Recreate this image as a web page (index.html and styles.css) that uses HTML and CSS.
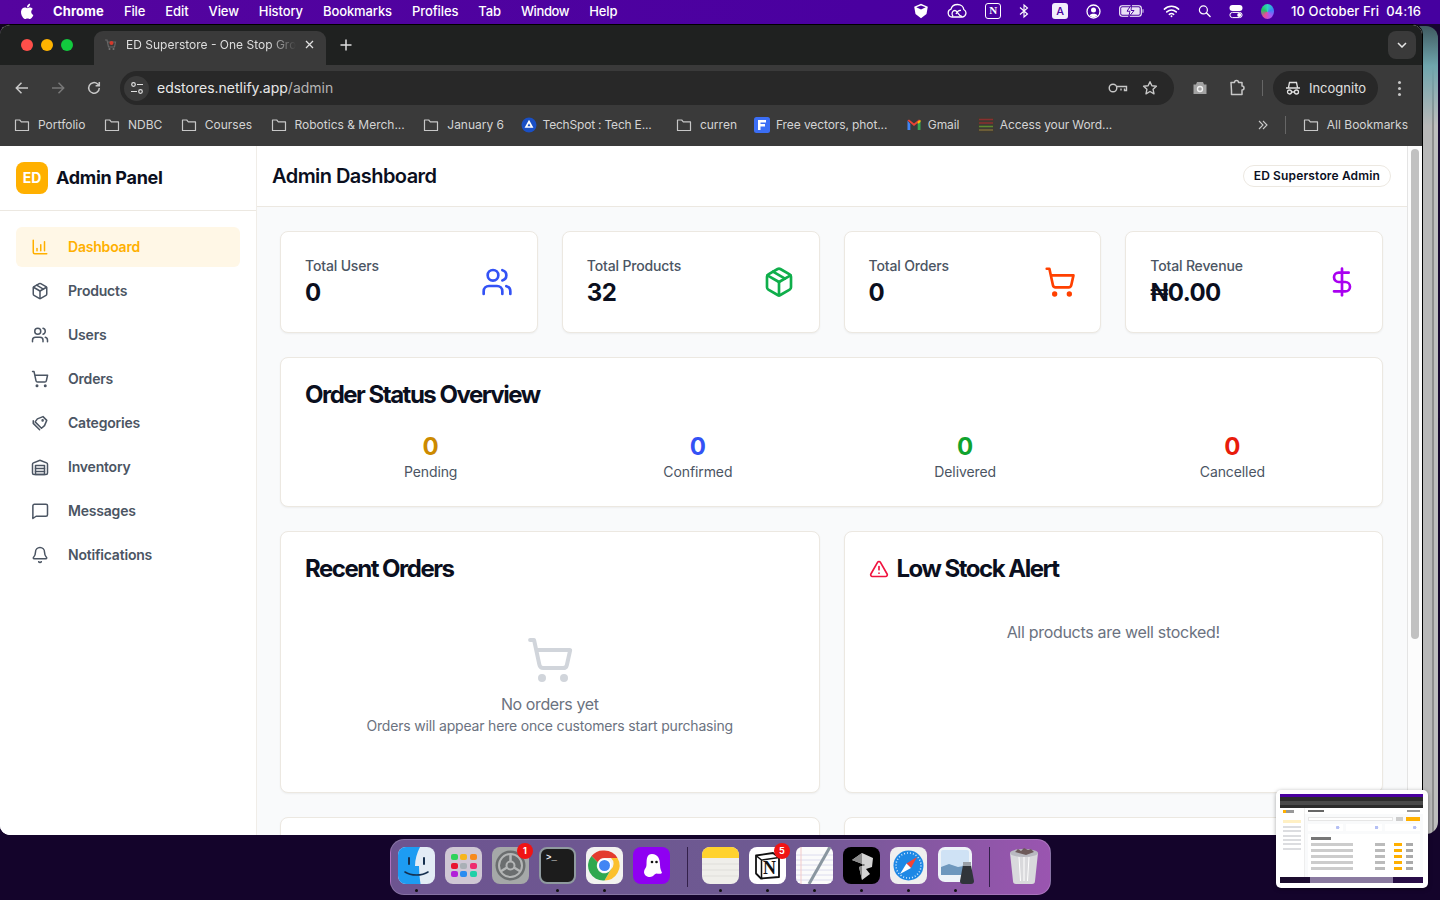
FILE: index.html
```html
<!DOCTYPE html>
<html lang="en">
<head>
  <meta charset="UTF-8" />
  <meta name="viewport" content="width=device-width, initial-scale=1.0" />
  <title>ED Superstore - Admin Dashboard</title>
  <link rel="stylesheet" href="styles.css">
</head>
<body>
  <svg width="0" height="0" class="defs">
    <defs>
      <symbol id="folder" viewBox="0 0 16 16"><path d="M1.500 3h4.200l1.600 1.800h7.200v8.700h-13z" fill="none" stroke="currentColor" stroke-width="1.200" stroke-linejoin="round"/></symbol>
      <symbol id="i-users" viewBox="0 0 24 24"><g fill="none" stroke="currentColor" stroke-width="2" stroke-linecap="round" stroke-linejoin="round"><path d="M16 21v-2a4 4 0 0 0-4-4H6a4 4 0 0 0-4 4v2"/><circle cx="9" cy="7" r="4"/><path d="M22 21v-2a4 4 0 0 0-3-3.870"/><path d="M16 3.130a4 4 0 0 1 0 7.750"/></g></symbol>
      <symbol id="i-box" viewBox="0 0 24 24"><g fill="none" stroke="currentColor" stroke-width="2" stroke-linecap="round" stroke-linejoin="round"><path d="M21 8a2 2 0 0 0-1-1.730l-7-4a2 2 0 0 0-2 0l-7 4A2 2 0 0 0 3 8v8a2 2 0 0 0 1 1.730l7 4a2 2 0 0 0 2 0l7-4A2 2 0 0 0 21 16z"/><path d="m3.300 7 8.700 5 8.700-5"/><path d="M12 22V12"/><path d="m7.500 4.270 9 5.150"/></g></symbol>
      <symbol id="i-cart" viewBox="0 0 24 24"><g fill="none" stroke="currentColor" stroke-width="2" stroke-linecap="round" stroke-linejoin="round"><circle cx="8" cy="21" r="1"/><circle cx="19" cy="21" r="1"/><path d="M2.050 2.050h2l2.660 12.420a2 2 0 0 0 2 1.580h9.780a2 2 0 0 0 1.950-1.570l1.650-7.430H5.120"/></g></symbol>
      <symbol id="i-dollar" viewBox="0 0 24 24"><g fill="none" stroke="currentColor" stroke-width="2" stroke-linecap="round" stroke-linejoin="round"><path d="M12 2v20"/><path d="M17 5H9.500a3.500 3.500 0 0 0 0 7h5a3.500 3.500 0 0 1 0 7H6"/></g></symbol>
      <symbol id="i-chart" viewBox="0 0 24 24"><g fill="none" stroke="currentColor" stroke-width="2" stroke-linecap="round" stroke-linejoin="round"><path d="M3 3v16a2 2 0 0 0 2 2h16"/><path d="M8 17v-3"/><path d="M13 17V9"/><path d="M18 17V5"/></g></symbol>
      <symbol id="i-tags" viewBox="0 0 24 24"><g fill="none" stroke="currentColor" stroke-width="2" stroke-linecap="round" stroke-linejoin="round"><path d="M8.500 6.500 16 3.500l5 5-3 7-4 3.500-8.500-8.500z"/><path d="M3 9v3.500L11.500 21"/><circle cx="15.500" cy="8.500" r=".7"/></g></symbol>
      <symbol id="i-warehouse" viewBox="0 0 24 24"><g fill="none" stroke="currentColor" stroke-width="2" stroke-linecap="round" stroke-linejoin="round"><path d="M22 8.350V20a2 2 0 0 1-2 2H4a2 2 0 0 1-2-2V8.350A2 2 0 0 1 3.260 6.500l8-3.200a2 2 0 0 1 1.480 0l8 3.200A2 2 0 0 1 22 8.350Z"/><path d="M6 18h12"/><path d="M6 14h12"/><rect x="6" y="10" width="12" height="12"/></g></symbol>
      <symbol id="i-message" viewBox="0 0 24 24"><path d="M22 17a2 2 0 0 1-2 2H6.800L2.500 22V5a2 2 0 0 1 2-2H20a2 2 0 0 1 2 2z" fill="none" stroke="currentColor" stroke-width="2" stroke-linecap="round" stroke-linejoin="round"/></symbol>
      <symbol id="i-bell" viewBox="0 0 24 24"><g fill="none" stroke="currentColor" stroke-width="2" stroke-linecap="round" stroke-linejoin="round"><path d="M10.270 21a2 2 0 0 0 3.460 0"/><path d="M3.260 15.330A1 1 0 0 0 4 17h16a1 1 0 0 0 .740-1.670C19.410 13.960 18 12.500 18 8A6 6 0 0 0 6 8c0 4.500-1.410 5.960-2.740 7.330"/></g></symbol>
      <symbol id="i-alert" viewBox="0 0 24 24"><g fill="none" stroke="currentColor" stroke-width="2" stroke-linecap="round" stroke-linejoin="round"><path d="m21.730 18-8-14a2 2 0 0 0-3.480 0l-8 14A2 2 0 0 0 4 21h16a2 2 0 0 0 1.730-3"/><path d="M12 9v4"/><path d="M12 17h.01"/></g></symbol>
    </defs>
  </svg>

  <header class="menubar">
    <div class="menu-left">
      <svg class="apple" viewBox="0 0 14 17" width="14" height="17"><path fill="#fff" d="M11.200 9c0-1.900 1.500-2.800 1.600-2.900-.9-1.300-2.200-1.500-2.700-1.500-1.200-.1-2.200.7-2.800.7s-1.500-.7-2.500-.7C3.500 4.600 2.300 5.400 1.600 6.500c-1.300 2.300-.3 5.700 1 7.600.6.900 1.400 2 2.400 1.900 1 0 1.300-.6 2.500-.6s1.500.6 2.500.6 1.700-.9 2.300-1.900c.7-1.100 1-2.100 1-2.200-.1 0-2.100-.8-2.100-2.900zM9.300 3.300c.5-.7.900-1.600.8-2.500-.8 0-1.700.5-2.300 1.200-.5.600-.9 1.500-.8 2.400.9.100 1.800-.4 2.300-1.100z"/></svg>
      <b>Chrome</b><span>File</span><span>Edit</span><span>View</span><span>History</span><span>Bookmarks</span><span>Profiles</span><span>Tab</span><span class="menu-tight">Window</span><span>Help</span>
    </div>
    <div class="menu-right">
      <svg width="16" height="16" viewBox="0 0 16 16"><path fill="#fff" d="M8 .8l6.800 3-1.300 7.200L8 15.200 2.500 11 1.200 3.800zM3.300 4.300L8 6.400l4.700-2.100L8 2.400z"/></svg>
      <svg width="20" height="16" viewBox="0 0 20 16"><g fill="none" stroke="#fff" stroke-width="1.300"><path d="M5 14a4 4 0 0 1-1-7.800C4.800 3 7.500 1.500 10.500 1.500c3.500 0 6 2.200 6.300 5A4 4 0 0 1 15.500 14z"/><path d="M6 13.500c-2.500-3.500 0-6 2-6 2.500 0 3.500 6 7 6M14 7.500c-2-.5-4 1.500-5 3.500"/></g></svg>
      <span class="n-badge">N</span>
      <svg class="bt" width="10" height="16" viewBox="0 0 10 16"><path d="M1 4.500l7.500 6.500L5 14V2l3.500 3L1 11.500" fill="none" stroke="#fff" stroke-width="1.100"/></svg>
      <span class="a-badge">A</span>
      <svg width="15" height="15" viewBox="0 0 15 15"><circle cx="7.500" cy="7.500" r="6.500" fill="none" stroke="#fff" stroke-width="1.300"/><circle cx="7.500" cy="6" r="2.500" fill="#fff"/><path d="M3.500 11.500c1-2.500 7-2.500 8 0-2 2-6 2-8 0z" fill="#fff"/></svg>
      <svg width="26" height="14" viewBox="0 0 26 14"><rect x=".7" y="1.700" width="21.600" height="10.600" rx="2.500" fill="none" stroke="#fff" stroke-width="1.100"/><rect x="2.200" y="3.200" width="18.500" height="7.600" rx="1.200" fill="#e9e0f6"/><path d="M12.500.8L8 7.200h3L9.700 13.200 15 6.500h-3z" fill="#fff" stroke="#4a00a0" stroke-width="1"/><path d="M24 5.200v3.600" stroke="#c9b5e6" stroke-width="1.200"/></svg>
      <svg width="17" height="14" viewBox="0 0 18 14"><g fill="none" stroke="#fff" stroke-width="1.700" stroke-linecap="round"><path d="M1.500 5c4-4 11-4 15 0M4 8c3-2.500 7-2.500 10 0M6.700 10.500c1.400-1 3.200-1 4.600 0"/></g><circle cx="9" cy="12.500" r="1" fill="#fff"/></svg>
      <svg width="13" height="14" viewBox="0 0 14 14"><circle cx="5.800" cy="5.800" r="4.300" fill="none" stroke="#fff" stroke-width="1.300"/><path d="M9 9l4 4" stroke="#fff" stroke-width="1.500" stroke-linecap="round"/></svg>
      <svg width="14" height="15" viewBox="0 0 14 15"><rect x=".5" y="1" width="13" height="6" rx="3" fill="#fff"/><rect x=".9" y="8.400" width="12.200" height="5.200" rx="2.600" fill="none" stroke="#fff"/><circle cx="10.200" cy="11" r="2" fill="#fff"/></svg>
      <span class="siri"></span>
      <span class="clock">10 October Fri&nbsp; 04:16</span>
    </div>
  </header>

  <div class="back-window"></div>

  <main class="browser">
    <div class="tabstrip">
      <div class="lights"><i class="light-red"></i><i class="light-yellow"></i><i class="light-green"></i></div>
      <div class="tab">
        <svg width="13" height="13" viewBox="0 0 13 13"><path d="M1 2h2l1.500 7h6l1-5H4" fill="none" stroke="#666" stroke-width="1.200"/><circle cx="7.500" cy="5" r="2" fill="#d5392b"/><circle cx="5.500" cy="11" r="1" fill="#777"/><circle cx="9.500" cy="11" r="1" fill="#777"/></svg>
        <span class="tab-title">ED Superstore - One Stop Gro</span>
        <svg width="9" height="9" viewBox="0 0 9 9"><path d="M1 1l7 7M8 1L1 8" stroke="#e0e0e0" stroke-width="1.300"/></svg>
      </div>
      <svg class="new-tab" width="12" height="12" viewBox="0 0 12 12"><path d="M6 .5v11M.5 6h11" stroke="#dedede" stroke-width="1.500"/></svg>
      <span class="tab-search"><svg width="10" height="6" viewBox="0 0 10 6"><path d="M1 1l4 4 4-4" fill="none" stroke="#e6e6e6" stroke-width="1.500"/></svg></span>
    </div>

    <div class="toolbar">
      <svg class="nav" width="16" height="16" viewBox="0 0 16 16"><path d="M14 8H2.500M7.500 2.800L2.300 8l5.200 5.200" fill="none" stroke="#c7c7c7" stroke-width="1.500"/></svg>
      <svg class="nav" width="16" height="16" viewBox="0 0 16 16"><path d="M2 8h11.500M8.500 2.800L13.700 8l-5.200 5.200" fill="none" stroke="#777" stroke-width="1.500"/></svg>
      <svg class="nav" width="16" height="16" viewBox="0 0 16 16"><path d="M13.300 8A5.300 5.300 0 1 1 11.600 4L13.300 5.700M13.300 2v3.700H9.600" fill="none" stroke="#c7c7c7" stroke-width="1.500"/></svg>
      <div class="omnibox">
        <span class="site-info"><svg width="14" height="14" viewBox="0 0 14 14"><g fill="none" stroke="#e0e0e0" stroke-width="1.200"><circle cx="3.500" cy="3.500" r="1.800"/><path d="M7 3.500h6M1 10.500h6"/><circle cx="10.500" cy="10.500" r="1.800"/></g></svg></span>
        <span class="url">edstores.netlify.app<em>/admin</em></span>
        <svg class="omni-key" width="20" height="12" viewBox="0 0 20 12"><g fill="none" stroke="#c7c7c7" stroke-width="1.400"><circle cx="5" cy="6" r="3.800"/><path d="M8.800 4.500h9.700v4h-2v-2M13 6.500v2"/></g></svg>
        <svg width="16" height="16" viewBox="0 0 16 16"><path d="M8 1.700l1.900 4.100 4.500.5-3.300 3 .9 4.500L8 11.500l-4 2.300.9-4.500-3.300-3 4.500-.5z" fill="none" stroke="#c7c7c7" stroke-width="1.400" stroke-linejoin="round"/></svg>
      </div>
      <svg class="tool" width="16" height="16" viewBox="0 0 16 16"><path d="M1.500 4.500h2.500l1-2.500h6l1 2.500h2.500v9.500h-13z" fill="#a3a3a3"/><circle cx="8" cy="9" r="2.500" fill="none" stroke="#efefef" stroke-width="1.400"/></svg>
      <svg class="tool" width="18" height="18" viewBox="0 0 18 18"><path d="M3 3.500h3.500a2 2 0 0 1 4 0H14v3.500a2 2 0 0 1 0 4v4.500H3.500V12z" fill="none" stroke="#c7c7c7" stroke-width="1.500" stroke-linejoin="round"/></svg>
      <span class="tool-sep"></span>
      <span class="incognito"><svg width="16" height="16" viewBox="0 0 16 16"><g fill="none" stroke="#e0e0e0" stroke-width="1.300"><path d="M1 8h14M3.500 7.500l1-5h7l1 5"/><circle cx="4.500" cy="12" r="2"/><circle cx="11.500" cy="12" r="2"/><path d="M6.500 12h3"/></g></svg>Incognito</span>
      <span class="kebab"><i></i><i></i><i></i></span>
    </div>

    <div class="bookmarks">
      <span class="bm"><svg class="bm-ico"><use href="#folder"/></svg>Portfolio</span>
      <span class="bm"><svg class="bm-ico"><use href="#folder"/></svg>NDBC</span>
      <span class="bm"><svg class="bm-ico"><use href="#folder"/></svg>Courses</span>
      <span class="bm"><svg class="bm-ico"><use href="#folder"/></svg>Robotics &amp; Merch...</span>
      <span class="bm"><svg class="bm-ico"><use href="#folder"/></svg>January 6</span>
      <span class="bm fav bm-tech"><svg class="bm-ico" viewBox="0 0 16 16"><circle cx="8" cy="8" r="7.500" fill="#1a4fc4"/><path d="M8 4.500l3 5.500H5z" fill="none" stroke="#fff" stroke-width="1.700"/></svg>TechSpot : Tech E...</span>
      <span class="bm"><svg class="bm-ico"><use href="#folder"/></svg>curren</span>
      <span class="bm fav bm-free"><svg class="bm-ico" viewBox="0 0 16 16"><rect width="16" height="16" rx="2.500" fill="#3b6ef5"/><path d="M4 3h8v2.500H6.500V7H11v2.500H6.500V13H4z" fill="#fff"/></svg>Free vectors, phot...</span>
      <span class="bm fav"><svg class="bm-ico" viewBox="0 0 16 16"><path d="M1.500 3.500v9.500h2.800V7z" fill="#4285f4"/><path d="M14.500 3.500v9.500h-2.800V7z" fill="#34a853"/><path d="M1.500 3.500L3 2.500 8 6.500l5-4 1.500 1L8 9z" fill="#ea4335"/><path d="M11.700 4.400L14.500 3v2L11.700 7z" fill="#fbbc05"/></svg>Gmail</span>
      <span class="bm fav"><svg class="bm-ico" viewBox="0 0 16 16"><rect width="16" height="16" fill="#3d3a33"/><path d="M1 2.500h14M1 6h14" stroke="#8a2f2f" stroke-width="1.500"/><path d="M1 9.500h14" stroke="#5d8a2f" stroke-width="1.500"/><path d="M1 13h14" stroke="#7d6a3a" stroke-width="1.500"/></svg>Access your Word...</span>
      <span class="bm-end">
        <svg width="10" height="10" viewBox="0 0 10 10"><path d="M1 1l4 4-4 4M5 1l4 4-4 4" fill="none" stroke="#c7c7c7" stroke-width="1.100"/></svg>
        <span class="bm-sep"></span>
        <span class="bm"><svg class="bm-ico"><use href="#folder"/></svg>All Bookmarks</span>
      </span>
    </div>

    <div class="page">
      <aside class="sidebar">
        <div class="brand"><span class="logo">ED</span><span class="brand-name">Admin Panel</span></div>
        <nav class="side-nav">
          <a class="nav-item active"><svg class="nav-ico"><use href="#i-chart"/></svg><span>Dashboard</span></a>
          <a class="nav-item"><svg class="nav-ico"><use href="#i-box"/></svg><span>Products</span></a>
          <a class="nav-item"><svg class="nav-ico"><use href="#i-users"/></svg><span>Users</span></a>
          <a class="nav-item"><svg class="nav-ico"><use href="#i-cart"/></svg><span>Orders</span></a>
          <a class="nav-item"><svg class="nav-ico"><use href="#i-tags"/></svg><span>Categories</span></a>
          <a class="nav-item"><svg class="nav-ico"><use href="#i-warehouse"/></svg><span>Inventory</span></a>
          <a class="nav-item"><svg class="nav-ico"><use href="#i-message"/></svg><span>Messages</span></a>
          <a class="nav-item"><svg class="nav-ico"><use href="#i-bell"/></svg><span>Notifications</span></a>
        </nav>
      </aside>

      <section class="main">
        <div class="topbar">
          <h1>Admin Dashboard</h1>
          <span class="admin-pill">ED Superstore Admin</span>
        </div>
        <div class="content">
          <div class="stats">
            <div class="card stat"><div><p class="stat-label">Total Users</p><p class="stat-value">0</p></div><svg class="stat-ico tone-blue"><use href="#i-users"/></svg></div>
            <div class="card stat"><div><p class="stat-label">Total Products</p><p class="stat-value">32</p></div><svg class="stat-ico tone-green"><use href="#i-box"/></svg></div>
            <div class="card stat"><div><p class="stat-label">Total Orders</p><p class="stat-value">0</p></div><svg class="stat-ico tone-orange"><use href="#i-cart"/></svg></div>
            <div class="card stat"><div><p class="stat-label">Total Revenue</p><p class="stat-value">₦0.00</p></div><svg class="stat-ico tone-purple"><use href="#i-dollar"/></svg></div>
          </div>

          <div class="card overview">
            <h2>Order Status Overview</h2>
            <div class="overview-grid">
              <div><p class="ov-num tone-amber">0</p><p class="ov-label">Pending</p></div>
              <div><p class="ov-num tone-blue">0</p><p class="ov-label">Confirmed</p></div>
              <div><p class="ov-num tone-leaf">0</p><p class="ov-label">Delivered</p></div>
              <div><p class="ov-num tone-red">0</p><p class="ov-label">Cancelled</p></div>
            </div>
          </div>

          <div class="two-col">
            <div class="card panel">
              <h2>Recent Orders</h2>
              <div class="empty">
                <svg class="empty-ico"><use href="#i-cart"/></svg>
                <p class="empty-title">No orders yet</p>
                <p class="empty-sub">Orders will appear here once customers start purchasing</p>
              </div>
            </div>
            <div class="card panel">
              <h2 class="with-ico"><svg class="alert-ico"><use href="#i-alert"/></svg>Low Stock Alert</h2>
              <p class="stocked">All products are well stocked!</p>
            </div>
          </div>

          <div class="two-col">
            <div class="card panel"></div>
            <div class="card panel"></div>
          </div>
        </div>
      </section>
      <div class="scrollbar"><span class="thumb"></span></div>
    </div>
  </main>

  <footer class="dock">
    <span class="app"><svg viewBox="0 0 37 37"><rect width="37" height="37" rx="8" fill="#e3ecf5"/><path d="M8 0h14c-3 6-5 12-5 19h4c0 6 .5 12 1.500 18H8a8 8 0 0 1-8-8V8a8 8 0 0 1 8-8z" fill="#1d9cf2"/><path d="M11 11v6M26 11v6" stroke="#16304f" stroke-width="2" stroke-linecap="round"/><path d="M7 25c6 4 17 4 23 0" fill="none" stroke="#16304f" stroke-width="1.600" stroke-linecap="round"/></svg></span>
    <span class="app launchpad"><i></i><i></i><i></i><i></i><i></i><i></i><i></i><i></i><i></i></span>
    <span class="app"><svg viewBox="0 0 37 37"><rect width="37" height="37" rx="8" fill="#a5a8a8"/><circle cx="18.500" cy="18.500" r="15" fill="#6b6e6f"/><circle cx="18.500" cy="18.500" r="11.500" fill="none" stroke="#b4b6b6" stroke-width="2"/><circle cx="18.500" cy="18.500" r="4" fill="none" stroke="#b4b6b6" stroke-width="2"/><path d="M18.500 14.500V7M15 20.500l-6.500 4M22 20.500l6.500 4" stroke="#b4b6b6" stroke-width="2.500"/></svg><em class="badge">1</em></span>
    <span class="app terminal"><span>&gt;_</span></span>
    <span class="app"><svg viewBox="0 0 37 37"><rect width="37" height="37" rx="8" fill="#f2f2f0"/><path d="M18.500 3.500a15 15 0 0 1 13 7.500H18.500a7.500 7.500 0 0 0-6.800 4.300L5.500 9A15 15 0 0 1 18.500 3.500z" fill="#e33b2e"/><path d="M31.500 11a15 15 0 0 1-13 22.500l6.500-11.200A7.500 7.500 0 0 0 25 11z" fill="#fbc02d"/><path d="M5.500 9a15 15 0 0 0 13 24.500l6.500-11.200a7.500 7.500 0 0 1-13.300-7z" fill="#2fa84f"/><circle cx="18.500" cy="18.500" r="7" fill="#fff"/><circle cx="18.500" cy="18.500" r="5.500" fill="#4285f4"/></svg></span>
    <span class="app"><svg viewBox="0 0 37 37"><rect width="37" height="37" rx="8" fill="#8f00f2"/><path d="M19 7c6 0 8 5 8 11 0 4 1.500 6 2 8-2 1.500-4 .5-5.500.5S20 30 17 30s-6-2-6-5 2.500-4 2.500-7C13.500 11 14 7 19 7z" fill="#fff"/><circle cx="19" cy="15" r="1.300" fill="#111"/><circle cx="23.500" cy="15" r="1.300" fill="#111"/></svg></span>
    <span class="dock-sep"></span>
    <span class="app"><svg viewBox="0 0 37 37"><rect width="37" height="37" rx="8" fill="#efeeea"/><path d="M0 11V8a8 8 0 0 1 8-8h21a8 8 0 0 1 8 8v3z" fill="#ffd22e"/><path d="M0 17h37M0 23h37M0 29h37" stroke="#dfdeda"/></svg></span>
    <span class="app notion"><svg viewBox="0 0 37 37"><rect width="37" height="37" rx="8" fill="#fff"/><path d="M7 8.500L24 6l6 4.500V30l-18 1.500-5-5z" fill="#fff" stroke="#111" stroke-width="1.800" stroke-linejoin="round"/><path d="M7.500 9l5 4 17.500-2.500M12.500 13v18" fill="none" stroke="#111" stroke-width="1.500"/></svg><span class="notion-n">N</span><em class="badge">5</em></span>
    <span class="app"><svg viewBox="0 0 37 37"><rect width="37" height="37" rx="6" fill="#fbfbfb"/><path d="M0 8h37M0 13h37M0 18h37M0 23h37M0 28h37M0 33h37" stroke="#dcdcee"/><path d="M5 0v37" stroke="#f2c9c9"/><path d="M34 0L13 37" stroke="#8a96a0" stroke-width="3"/></svg></span>
    <span class="app"><svg viewBox="0 0 37 37"><rect width="37" height="37" rx="8" fill="#000"/><path d="M19 6l11 5-1 9-6 2 4 5-8 6-3-13 6-2-13-5z" fill="#d4d4d4"/><path d="M19 6l-10 7 13 5-6 2 3 13z" fill="#8b8b8b"/></svg></span>
    <span class="app"><svg viewBox="0 0 37 37"><rect width="37" height="37" rx="8" fill="#efefef"/><circle cx="18.500" cy="18.500" r="15" fill="#1e88e5"/><circle cx="18.500" cy="18.500" r="12.500" fill="none" stroke="#d5ebff" stroke-width="1.500" stroke-dasharray="1 2"/><path d="M27 10l-6 11-4.500-4.500z" fill="#f44336"/><path d="M10 27l6.500-10.500 4.500 4.500z" fill="#fff"/></svg></span>
    <span class="app"><svg viewBox="0 0 37 37"><rect x="1" width="34" height="35" rx="7" fill="#eef3f8"/><rect x="4" y="3" width="28" height="25" rx="2" fill="#cfe2f5"/><path d="M4 20l8-3 9 3 11-2v10H4z" fill="#6e97bd"/><path d="M26 18h8l3 16a3 3 0 0 1-3 3h-8a3 3 0 0 1-3-3z" fill="#30343a"/><rect x="26" y="15" width="8" height="4" fill="#9aa0a8"/></svg></span>
    <span class="dock-sep sep-last"></span>
    <span class="app trash"><svg viewBox="0 0 34 37"><path d="M3 6h28l-3 28a3 3 0 0 1-3 3H9a3 3 0 0 1-3-3z" fill="#d9d9dc"/><ellipse cx="17" cy="6" rx="14" ry="4" fill="#b9b9c0"/><path d="M8 5l3-3 3 2 3-3 4 2 3-1 3 3-8 3z" fill="#6d5a5a"/><path d="M12 10l1.500 24M22 10l-1.500 24M17 10v24" stroke="#fff" stroke-width="1"/></svg></span>
    <i class="dot d1"></i><i class="dot d2"></i><i class="dot d3"></i><i class="dot d4"></i><i class="dot d5"></i><i class="dot d6"></i><i class="dot d7"></i><i class="dot d8"></i><i class="dot d9"></i>
  </footer>

  <div class="shot-thumb">
    <div class="st-menubar"></div>
    <div class="st-chrome"></div>
    <div class="st-page">
      <div class="st-side"><i class="st-logo"></i><i class="st-on"></i><i></i><i></i><i></i><i></i><i></i><i></i></div>
      <div class="st-body">
        <div class="st-top"><i class="st-title"></i><i class="st-admin"></i></div>
        <div class="st-search"><i class="st-field"></i><i class="st-ghost"></i><i class="st-btn"></i></div>
        <div class="st-stats"><i></i><i></i><i></i></div>
        <div class="st-table"><i class="st-head"></i><i></i><i></i><i></i><i></i><i></i></div>
      </div>
    </div>
    <div class="st-dock"><i></i></div>
  </div>
</body>
</html>
```

FILE: styles.css
```css
* {
  box-sizing: border-box;
}
html, body {
  margin: 0;
  height: 100%;
}
body {
  position: relative;
  width: 1440px;
  height: 900px;
  overflow: hidden;
  font-family: Inter, 'Noto Sans', sans-serif;
  background: linear-gradient(168deg, transparent 60%, #14042b 60%),
    linear-gradient(100deg, #12031f 0%, #1c0640 40%, #4a1672 74%, #170530 88%);
}
p, h1, h2 {
  margin: 0;
}
.defs {
  position: absolute;
}

/* mac menu bar */
.menubar {
  height: 24px;
  padding: 0 19px 2px 20px;
  display: flex;
  justify-content: space-between;
  align-items: center;
  background: linear-gradient(90deg, #55049f, #4a00a0 60%, #4600a0);
  color: #fff;
  font-size: 13px;
  font-weight: 500;
}
.menu-left {
  display: flex;
  align-items: center;
  gap: 20px;
}
.menu-left .apple {
  margin-right: -1px;
}
.menu-left b {
  font-weight: 700;
  letter-spacing: .1px;
}
.menu-left span {
  letter-spacing: -0.1px;
}
.menu-left .menu-tight {
  letter-spacing: -0.4px;
}
.menu-right {
  display: flex;
  align-items: center;
  gap: 18px;
}
.bt {
  margin-right: 5px;
}
.n-badge {
  width: 16px;
  height: 16px;
  border: 1.3px solid #fff;
  border-radius: 3px;
  font: 700 11px 'Liberation Serif', serif;
  text-align: center;
  line-height: 13px;
}
.a-badge {
  width: 16px;
  height: 16px;
  background: #f2eefc;
  color: #4a00a0;
  border-radius: 3px;
  font-size: 11px;
  text-align: center;
  line-height: 16px;
}
.siri {
  width: 13px;
  height: 15px;
  border-radius: 50%;
  background: conic-gradient(#2dd4bf, #3b82f6, #a855f7, #ec4899, #22c55e, #2dd4bf);
}
.clock {
  margin-left: -1px;
  letter-spacing: .08px;
}

/* windows on the desktop */
.back-window {
  position: absolute;
  left: 1416px;
  top: 26px;
  width: 22px;
  height: 808px;
  background: linear-gradient(#3f5a60 0, #6fa5ad 40px, rgba(160, 175, 178, 0) 100px),
    linear-gradient(90deg, #b8b8b8 0 73%, #8e8e8e 73% 82%, #bdbdbd 82%);
  border-radius: 0 12px 12px 0;
}
.browser {
  position: absolute;
  left: 0;
  top: 24px;
  width: 1423px;
  height: 811px;
  display: flex;
  flex-direction: column;
  overflow: hidden;
  border: 1px solid #000;
  border-left: 0;
  border-bottom: 0;
  border-radius: 10px;
  background: #fff;
}

/* tab strip */
.tabstrip {
  height: 40px;
  flex: none;
  display: flex;
  align-items: flex-end;
  background: #1f2120;
  position: relative;
}
.lights {
  display: flex;
  gap: 8px;
  padding: 0 0 14px 21px;
  margin-right: 21px;
}
.lights i {
  width: 12px;
  height: 12px;
  border-radius: 50%;
}
.light-red { background: #ff4f4a; }
.light-yellow { background: #ffb400; }
.light-green { background: #12c93e; }
.tab {
  width: 232px;
  height: 34px;
  padding: 0 12px 7px 10px;
  display: flex;
  align-items: center;
  gap: 9px;
  background: #3a3a3a;
  border-radius: 9px 9px 0 0;
  color: #dedede;
  font-size: 12px;
}
.tab-title {
  flex: 1;
  min-width: 0;
  overflow: hidden;
  white-space: nowrap;
  -webkit-mask-image: linear-gradient(90deg, #000 84%, transparent);
  mask-image: linear-gradient(90deg, #000 84%, transparent);
}
.new-tab {
  margin: 0 0 14px 14px;
}
.tab-search {
  position: absolute;
  right: 6px;
  top: 6px;
  width: 28px;
  height: 28px;
  display: flex;
  align-items: center;
  justify-content: center;
  background: #3a3a3a;
  border-radius: 8px;
}

/* toolbar */
.toolbar {
  height: 40px;
  flex: none;
  display: flex;
  align-items: center;
  padding: 6px 14px 0 14px;
  background: #3a3a3a;
}
.nav {
  margin-right: 20px;
}
.omnibox {
  width: 1054px;
  height: 34px;
  margin-left: -2px;
  padding: 0 16px 0 4px;
  display: flex;
  align-items: center;
  background: #282828;
  border-radius: 17px;
}
.site-info {
  width: 25px;
  height: 25px;
  display: flex;
  align-items: center;
  justify-content: center;
  background: #3a3a3a;
  border-radius: 50%;
}
.url {
  flex: 1;
  margin: -2px 0 0 8px;
  color: #e8e8e8;
  font-size: 14px;
}
.url em {
  font-style: normal;
  color: #b5b5b5;
}
.omni-key {
  margin-right: 14px;
}
.tool {
  margin-left: 18px;
}
.tool + .tool {
  margin-left: 20px;
}
.tool-sep {
  width: 1px;
  height: 16px;
  margin: 0 10px 0 16px;
  background: #666;
}
.incognito {
  width: 105px;
  height: 34px;
  display: flex;
  align-items: center;
  justify-content: center;
  gap: 8px;
  background: #282828;
  border-radius: 17px;
  color: #e0e0e0;
  font-size: 13px;
}
.kebab {
  margin-left: 20px;
  display: flex;
  flex-direction: column;
  gap: 3px;
}
.kebab i {
  width: 3px;
  height: 3px;
  border-radius: 50%;
  background: #c7c7c7;
}

/* bookmarks */
.bookmarks {
  height: 41px;
  flex: none;
  display: flex;
  align-items: center;
  gap: 18.5px;
  padding: 0 14px 2px;
  background: #3a3a3a;
  color: #d4d4d4;
  font-size: 12px;
}
.bm {
  display: flex;
  align-items: center;
  gap: 8px;
  white-space: nowrap;
}
.fav {
  gap: 6px;
  letter-spacing: -0.1px;
}
.bm-tech {
  margin: 0 6px 0 -2px;
  letter-spacing: -0.2px;
}
.bm-free {
  margin-left: -1.5px;
}
.bm-ico {
  width: 16px;
  height: 16px;
  color: #c7c7c7;
}
.bm-end {
  margin-left: auto;
  display: flex;
  align-items: center;
  gap: 17px;
}
.bm-sep {
  width: 1px;
  height: 18px;
  background: #666;
}

/* admin page */
.page {
  flex: 1;
  min-height: 0;
  display: flex;
  background: #f9fafb;
  overflow: hidden;
}
.sidebar {
  width: 257px;
  flex: none;
  background: #fff;
  border-right: 1px solid #f0ede8;
}
.brand {
  height: 65px;
  padding: 0 16px 1px;
  display: flex;
  align-items: center;
  gap: 8px;
  border-bottom: 1px solid #ece8e1;
}
.logo {
  width: 32px;
  height: 32px;
  display: flex;
  align-items: center;
  justify-content: center;
  background: #ffb000;
  border-radius: 8px;
  color: #fff;
  font-size: 14px;
  font-weight: 700;
}
.brand-name {
  color: #0b0f1e;
  font-size: 18px;
  font-weight: 700;
  letter-spacing: -0.3px;
}
.side-nav {
  padding: 16px;
  display: flex;
  flex-direction: column;
  gap: 4px;
}
.nav-item {
  height: 40px;
  padding: 0 15px;
  display: flex;
  align-items: center;
  gap: 19px;
  border-radius: 6px;
  color: #4b5563;
  font-size: 14px;
  font-weight: 600;
  letter-spacing: -0.2px;
}
.nav-item span {
  margin-top: -2px;
}
.nav-item.active {
  background: #fff7e6;
  color: #ffb000;
}
.nav-ico {
  width: 18px;
  height: 18px;
}
.main {
  flex: 1;
  min-width: 0;
}
.topbar {
  height: 61px;
  padding: 0 16px 0 15px;
  display: flex;
  align-items: center;
  justify-content: space-between;
  background: #fff;
  border-bottom: 1px solid #ece8e1;
}
.topbar h1 {
  color: #0b0f1e;
  font-size: 20px;
  font-weight: 600;
  letter-spacing: -0.55px;
}
.admin-pill {
  padding: 2px 10px;
  border: 1px solid #ece8e1;
  border-radius: 11px;
  color: #0b0f1e;
  font-size: 12px;
  font-weight: 600;
  line-height: 16px;
  letter-spacing: .15px;
}
.content {
  padding: 24px 24px 0 23px;
  display: flex;
  flex-direction: column;
  gap: 24px;
}
.card {
  background: #fff;
  border: 1px solid #ece8e1;
  border-radius: 8px;
  box-shadow: 0 1px 2px rgba(0, 0, 0, .05);
}
.stats {
  display: grid;
  grid-template-columns: repeat(4, 1fr);
  gap: 24px;
}
.stat {
  height: 102px;
  padding: 0 24px;
  display: flex;
  align-items: center;
  justify-content: space-between;
}
.stat-label {
  color: #4b5563;
  font-size: 14px;
  font-weight: 500;
  line-height: 20px;
  letter-spacing: -0.15px;
}
.stat-value {
  margin: 1px 0 -1px;
  color: #0b0f1e;
  font-size: 24px;
  font-weight: 700;
  line-height: 32px;
  letter-spacing: -0.6px;
}
.stat-ico {
  width: 32px;
  height: 32px;
}
.tone-blue { color: #3352f5; }
.tone-green { color: #0fae4b; }
.tone-orange { color: #ff4000; }
.tone-purple { color: #a900f0; }
.tone-amber { color: #cc8a00; }
.tone-leaf { color: #0fa32e; }
.tone-red { color: #e81c0c; }
.overview {
  height: 150px;
  padding: 24px;
}
h2 {
  margin: -1px 0 1px;
  color: #0b0f1e;
  font-size: 24px;
  font-weight: 700;
  letter-spacing: -1.5px;
  line-height: 28px;
}
.overview-grid {
  margin-top: 22px;
  display: grid;
  grid-template-columns: repeat(4, 1fr);
  gap: 16px;
  text-align: center;
}
.ov-num {
  font-size: 24px;
  font-weight: 700;
  line-height: 32px;
}
.ov-label {
  margin-top: -1px;
  color: #4b5563;
  font-size: 14px;
  line-height: 20px;
  letter-spacing: -0.1px;
}
.two-col {
  display: grid;
  grid-template-columns: 1fr 1fr;
  gap: 24px;
}
.panel {
  height: 262px;
  padding: 24px;
}
.with-ico {
  display: flex;
  align-items: center;
  gap: 8px;
}
.alert-ico {
  width: 20px;
  height: 20px;
  color: #f0133f;
}
.empty {
  margin-top: 53px;
  text-align: center;
  color: #6b7280;
}
.empty-ico {
  width: 48px;
  height: 48px;
  color: #d1d5db;
  display: block;
  margin: 0 auto 8px;
}
.empty-title {
  font-size: 16px;
  line-height: 24px;
  letter-spacing: -0.4px;
}
.empty-sub {
  font-size: 14px;
  line-height: 20px;
  letter-spacing: -0.18px;
}
.stocked {
  margin-top: 37px;
  text-align: center;
  color: #6b7280;
  font-size: 16px;
  line-height: 24px;
  letter-spacing: -0.3px;
}
.scrollbar {
  width: 15px;
  flex: none;
  padding: 3px;
  background: #fcfcfc;
  border-left: 1px solid #e4e4e4;
}
.thumb {
  display: block;
  width: 8px;
  height: 490px;
  border-radius: 4px;
  background: #c1c1c1;
}

/* dock */
.dock {
  position: absolute;
  left: 390px;
  top: 839px;
  width: 661px;
  height: 56px;
  padding: 0 2px;
  display: flex;
  align-items: center;
  background: linear-gradient(90deg, #6d5490, #6e5a92 60%, #9a55b0);
  border: 1px solid rgba(255, 255, 255, .18);
  border-radius: 14px;
}
.app {
  position: relative;
  top: -1.5px;
  width: 37px;
  height: 37px;
  margin: 0 5px;
  flex: none;
  display: block;
}
.app svg {
  display: block;
  width: 100%;
  height: 100%;
}
.dock-sep {
  width: 1px;
  height: 40px;
  margin: 0 9.5px 0 11.5px;
  background: #33204a;
}
.sep-last {
  margin: 0 12px 0 10px;
}
.badge {
  position: absolute;
  right: -4px;
  top: -4px;
  width: 16px;
  height: 16px;
  border-radius: 50%;
  background: #f01414;
  color: #fff;
  font: 700 9px/16px Inter, sans-serif;
  text-align: center;
}
.launchpad {
  display: grid;
  grid-template-columns: repeat(3, 7px);
  gap: 2.5px;
  align-content: center;
  justify-content: center;
  background: #cfc7d4;
  border-radius: 8px;
}
.launchpad i {
  height: 6px;
  border-radius: 2px;
  background: #e8152f;
}
.launchpad i:nth-child(1) { background: #2fd25a; }
.launchpad i:nth-child(2) { background: #f7b51c; }
.launchpad i:nth-child(3) { background: #f78a1c; }
.launchpad i:nth-child(5) { background: #a9b0b6; }
.launchpad i:nth-child(6) { background: #ee2a6f; }
.launchpad i:nth-child(7) { background: #b120d8; }
.launchpad i:nth-child(8) { background: #2a8cf0; }
.launchpad i:nth-child(9) { background: #1fd0a8; }
.terminal {
  padding: 4px 5px;
  background: #1c1c1c;
  border: 2px solid #8f9a9f;
  border-radius: 8px;
  color: #eee;
  font: 700 9px 'Liberation Mono', monospace;
}
.notion-n {
  position: absolute;
  left: 14px;
  top: 11px;
  color: #111;
  font: 700 18px/20px 'Liberation Serif', serif;
}
.trash {
  width: 34px;
}
.dot {
  position: absolute;
  top: 49px;
  width: 3px;
  height: 3px;
  border-radius: 50%;
  background: #111;
}
.d1 { left: 23.5px; }
.d2 { left: 164.5px; }
.d3 { left: 211.5px; }
.d4 { left: 327.5px; }
.d5 { left: 374.5px; }
.d6 { left: 421.5px; }
.d7 { left: 468.5px; }
.d8 { left: 515.5px; }
.d9 { left: 562.5px; }

/* screenshot preview in the corner */
.shot-thumb {
  position: absolute;
  left: 1276px;
  top: 790px;
  width: 152px;
  height: 98px;
  padding: 4px 5px 5px 4px;
  display: flex;
  flex-direction: column;
  background: #fff;
  border-radius: 5px;
  overflow: hidden;
  box-shadow: 0 1px 4px rgba(0, 0, 0, .35);
}
.st-menubar {
  height: 3px;
  flex: none;
  background: #4a00a0;
}
.st-chrome {
  height: 11px;
  flex: none;
  background: repeating-linear-gradient(#2c2c2c 0 4px, #4a4a4a 4px 8px);
}
.st-page {
  flex: 1;
  display: flex;
  background: #f9fafb;
}
.st-side {
  width: 25px;
  padding: 2px 3px;
  display: flex;
  flex-direction: column;
  gap: 2.4px;
  background: #fff;
  border-right: 1px solid #eee;
}
.st-side i {
  height: 2px;
  background: #dcdde0;
}
.st-side .st-logo {
  width: 11px;
  height: 3px;
  margin-bottom: 5px;
  background: linear-gradient(90deg, #ffb000 0 30%, #999 30%);
}
.st-side .st-on {
  height: 3px;
  background: #fff0c4;
}
.st-body {
  flex: 1;
  min-width: 0;
  display: flex;
  flex-direction: column;
}
.st-top {
  height: 6px;
  padding: 2px 3px;
  display: flex;
  justify-content: space-between;
  background: #fff;
}
.st-title, .st-admin {
  width: 16px;
  height: 2px;
  background: #666;
}
.st-admin {
  width: 13px;
  background: #999;
}
.st-search {
  padding: 3px;
  display: flex;
  align-items: center;
  gap: 3px;
}
.st-field {
  flex: 1;
  height: 4px;
  background: #fff;
  border: 1px solid #e6e6e6;
}
.st-ghost {
  width: 7px;
  height: 4px;
  background: #ccc;
}
.st-btn {
  width: 14px;
  height: 4px;
  background: #ffb000;
}
.st-stats {
  padding: 0 3px;
  display: grid;
  grid-template-columns: repeat(3, 1fr);
  gap: 3px;
}
.st-stats i {
  height: 7px;
  background: radial-gradient(circle at 85% 50%, #b5c0f5 0 1.5px, #fff 2px);
}
.st-table {
  flex: 1;
  margin: 3px 3px 0;
  padding: 3px 3px 0;
  display: flex;
  flex-direction: column;
  gap: 3.5px;
  background: #fff;
}
.st-table i {
  height: 2.5px;
  background: linear-gradient(90deg, #ccc 0 40%, #fff 40% 60%, #bbb 60% 70%, #fff 70% 78%, #ffb000 78% 86%, #fff 86% 90%, #aaa 90% 96%, #fff 96%);
}
.st-table .st-head {
  width: 20px;
  background: #777;
}
.st-dock {
  height: 6px;
  flex: none;
  padding: 0 30px;
  background: linear-gradient(90deg, #1a0c2c, #2a0d4a);
}
.st-dock i {
  display: block;
  height: 6px;
  background: #8a7aa0;
}
```
